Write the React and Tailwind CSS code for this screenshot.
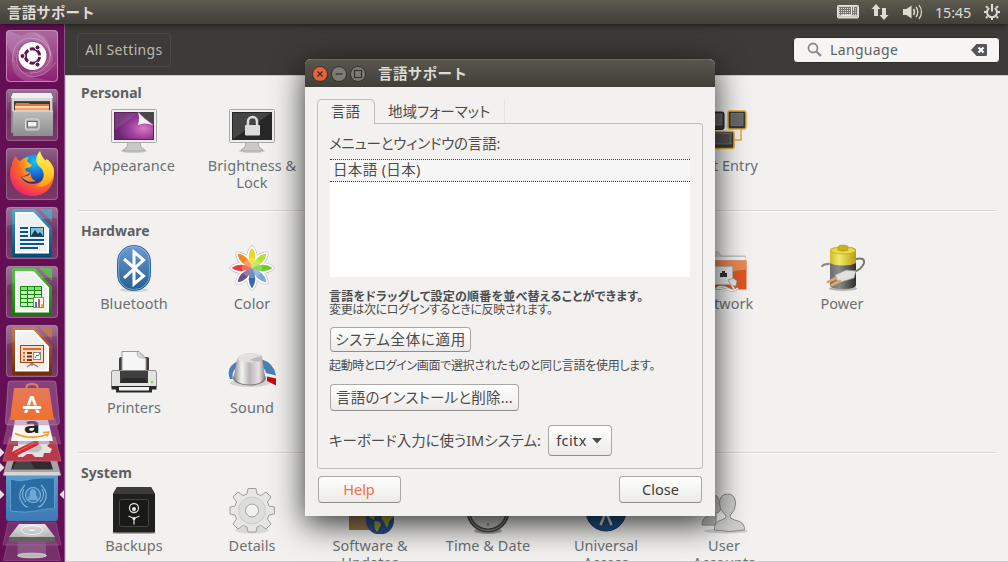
import React from 'react';

const JP = 'font-["Noto_Sans","Noto_Sans_CJK_JP",sans-serif]';

/* ---------- top panel ---------- */

const TopPanel = () => (
  <header className="relative z-10 h-6 shrink-0 flex items-center justify-between pl-[7px] pr-2 bg-linear-to-b from-[#5d5a4f] to-[#403f3a] shadow-[0_1px_6px_rgba(0,0,0,0.6)]">
    <span className='-mt-px font-["Noto_Sans_CJK_JP",sans-serif] font-bold text-[14.5px] tracking-[0.15px] leading-6 text-[#dfdbd2]'>言語サポート</span>
    <div className="flex items-center text-[#dfdbd2]">
      <svg width="22" height="14" viewBox="0 0 22 14" className="mr-3">
        <rect x="0.5" y="0.5" width="21" height="12.5" rx="1" fill="#cfccc6" stroke="#e8e5df" />
        <rect x="2" y="2" width="18" height="8" fill="#77756f" />
        <path d="M2 3.5h18M2 5.5h18M2 7.5h18M2 9.5h18" stroke="#d9d6d0" strokeWidth="1" strokeDasharray="1 1" />
        <path d="M14.5 2v8M16.5 2v3" stroke="#efece6" strokeWidth="1" />
        <path d="M5 10h9" stroke="#fff" strokeWidth="1" />
      </svg>
      <svg width="18" height="18" viewBox="0 0 18 18" className="mr-3.5" fill="currentColor">
        <path d="M5 1L9.5 6H7v7H3V6H.5z" />
        <path d="M13 17l4.5-5H15V5h-4v7H8.5z" />
      </svg>
      <svg width="21" height="18" viewBox="0 0 21 18" className="mr-[11px]" fill="none" stroke="currentColor">
        <path d="M0 6h3.5L8.500 2.500v13L3.500 12H0z" fill="currentColor" stroke="none" />
        <path d="M10.500 6q2 3 0 6" strokeWidth="1.5" />
        <path d="M13 4q3.600 5 0 10" strokeWidth="1.300" />
        <path d="M16 2q5 7 0 14" strokeWidth="1.200" />
      </svg>
      <span className='font-["Noto_Sans",sans-serif] text-[14.5px] leading-6 w-[37px] mr-3 tracking-[-0.2px]'>15:45</span>
      <svg width="16" height="18" viewBox="0 0 16 18" fill="none" stroke="currentColor">
        <path d="M5.300 5A5 5 0 1 0 10.700 5" strokeWidth="2" />
        <path d="M8 1v7.500" strokeWidth="2" />
        <path d="M3.500 13.500l-1.500 1.500M12.500 13.500l1.500 1.500M2.600 9H0M13.400 9H16M8 14.500V17M3.700 4.800L2 3.200M12.300 4.800L14 3.200" strokeWidth="2" />
      </svg>
    </div>
  </header>
);

/* ---------- launcher ---------- */

const Tile = ({ children, className = 'bg-linear-to-b from-[#8f6189] via-[#70305f] to-[#7a3a6c]' }) => (
  <div className={`h-[52px] w-[52px] shrink-0 rounded-[4px] overflow-hidden shadow-[inset_0_0_0_1px_rgba(255,255,255,0.22)] ${className}`}>
    <svg width="52" height="52" viewBox="0 0 52 52">{children}</svg>
  </div>
);

const DashIcon = () => (
  <Tile className="bg-linear-to-b from-[#aa6ba0] to-[#8f1a74]">
    <g fill="#fff" opacity="0.14">
      <path d="M0 0Q14 4 25 11Q10 12 10 28Q-2 18 0 0z" />
      <path d="M26 2Q46 4 44 26Q40 12 26 10Q10 8 8 24Q8 4 26 2z" />
      <path d="M44 18Q52 34 38 44Q24 50 14 42Q34 42 40 32Q44 26 44 18z" />
      <path d="M8 20Q6 40 30 48L52 52H20Q0 42 8 20z" />
    </g>
    <g fill="none" stroke="#fff" strokeOpacity=".35" strokeWidth=".8">
      <path d="M7 32Q5 10 24 8Q42 8 45 26" />
      <path d="M28 3Q47 12 44 30Q38 44 24 43" />
      <path d="M12 20Q6 38 22 46Q38 50 50 32" />
    </g>
    <rect x="0.5" y="0.5" width="51" height="51" rx="4" fill="none" stroke="#cf8fc3" strokeOpacity="0.7" />
    <circle cx="26.500" cy="26" r="14" fill="#fff" />
    <circle cx="26.500" cy="26" r="7.200" fill="none" stroke="#5c174c" strokeWidth="3" strokeDasharray="13.100 2" strokeDashoffset="-1" />
    <g fill="#5c174c" stroke="#fff" strokeWidth="1">
      <circle cx="16.500" cy="26" r="2.500" />
      <circle cx="31.500" cy="17.400" r="2.500" />
      <circle cx="31.500" cy="34.600" r="2.500" />
    </g>
  </Tile>
);

const FilesIcon = () => (
  <Tile>
    <defs>
      <linearGradient id="cab" x1="0" y1="0" x2="0" y2="1">
        <stop offset="0" stopColor="#bdbdbd" />
        <stop offset="1" stopColor="#8e8e8e" />
      </linearGradient>
    </defs>
    <path d="M7 4h38l2 5v35H5V9z" fill="#d9d9d9" />
    <path d="M5 9h42v35H5z" fill="#8b8b8b" />
    <path d="M7 4h38l2 5H5z" fill="#ececec" />
    <path d="M6 9h40v13H6z" fill="#d3d3d3" />
    <rect x="8" y="12" width="36" height="10" fill="#3e3632" />
    <path d="M9 16l1-2h13l1 1h19v7H9z" fill="#e0763a" />
    <rect x="9" y="17" width="34" height="2" fill="#f7d9bd" />
    <rect x="9" y="19" width="34" height="3" fill="#f0a35c" />
    <rect x="7" y="21.500" width="40" height="25.500" rx="1" fill="url(#cab)" />
    <path d="M7 22h40" stroke="#e6e6e6" />
    <rect x="19.500" y="30" width="13.500" height="11" rx="2" fill="#adadad" stroke="#dedede" />
    <rect x="21.500" y="32.500" width="9.500" height="5.500" fill="#f1f1f1" stroke="#666" />
    <path d="M2 1h48v12H2z" fill="#fff" opacity=".1" />
  </Tile>
);

const FirefoxIcon = () => (
  <Tile>
    <defs>
      <radialGradient id="ffx" cx=".75" cy=".15" r=".95">
        <stop offset="0" stopColor="#fff14a" />
        <stop offset=".35" stopColor="#ffb51e" />
        <stop offset=".6" stopColor="#ff6a24" />
        <stop offset="1" stopColor="#ee1e6e" />
      </radialGradient>
      <radialGradient id="globe" cx=".6" cy=".25" r=".8">
        <stop offset="0" stopColor="#18c3f7" />
        <stop offset=".5" stopColor="#1576d8" />
        <stop offset="1" stopColor="#25237e" />
      </radialGradient>
      <linearGradient id="flame" x1="0" y1="0" x2="0" y2="1">
        <stop offset="0" stopColor="#fff45a" />
        <stop offset=".6" stopColor="#ffd02c" />
        <stop offset="1" stopColor="#ff9a1c" />
      </linearGradient>
    </defs>
    <circle cx="26" cy="21" r="14.500" fill="url(#globe)" />
    <path d="M10 8Q6 12 6 17Q4 20 4 26C4 39 14 48 27 48C40 48 48 38 48 26C48 20 45 14 42 12C43 24 39 36 27 36C20 36 16 32 15 28C18 29 21 27 24 24C20 24 18 22 20 20Q25 20 26 17Q22 15 21 13Q22 10 23 9Q18 9 14 13Q11 12 10 8z" fill="url(#ffx)" />
    <path d="M34 3C28 10 30 16 35 20C40 25 38 34 30 38C39 41 48 34 48 23C48 17 44 15 42 12C40 10 40 13 39 12C36 9 35 6 34 3z" fill="url(#flame)" />
    <path d="M15 28q6 2 10-3q-1 6 5 8q-9 3-15-5z" fill="#ff8a20" />
  </Tile>
);

const OfficeIcon = ({ id, light, dark, children }) => (
  <Tile>
    <defs>
      <linearGradient id={id} x1="0" y1="0" x2="0" y2="1">
        <stop offset="0" stopColor={light} />
        <stop offset="1" stopColor={dark} />
      </linearGradient>
    </defs>
    <path d="M8 2H29L46 21V48q0 2-2 2H8q-2 0-2-2V4q0-2 2-2z" fill={`url(#${id})`} />
    <path d="M33.500 2H46v13z" fill={light} opacity=".85" />
    <path d="M9 5H27.500L43 21.500V46.500H9z" fill="#fff" />
    <path d="M11 7H26.500L41 22.500V44.500H11z" fill="#f0f0f0" />
    {children}
    <path d="M1 1h50v10Q24 12 1 19z" fill="#fff" opacity=".12" />
  </Tile>
);

const WriterIcon = () => (
  <OfficeIcon id="wr" light="#3a9ac9" dark="#064a75">
    <path d="M14 21h8M14 25h8M14 29h8M14 33h24M14 37h24M14 41h18" stroke="#0a5787" strokeWidth="2" />
    <rect x="24.500" y="20.500" width="13" height="9" fill="#6fc4ec" stroke="#0a5787" />
    <path d="M25 29l4-6 3 4 2-2 3 4z" fill="#333" />
    <path d="M35 21h2v2z" fill="#f6c52c" />
  </OfficeIcon>
);

const CalcIcon = () => (
  <OfficeIcon id="ca" light="#4cb83a" dark="#127a06">
    <rect x="14" y="20" width="22" height="21" fill="#c8efc0" />
    <path d="M14 22h22" stroke="#8edb80" strokeWidth="4" />
    <path d="M14.500 20.500h21v20h-21zM14 24.500h22M14 28.500h22M14 32.500h22M14 36.500h22M21.500 20v21M28.500 20v21" stroke="#168a0a" fill="none" />
    <rect x="27.500" y="31.500" width="10" height="10" fill="#fff" stroke="#8a8a8a" />
    <path d="M29 36h2v5h-2z" fill="#1e88d8" />
    <path d="M32 33h2v8h-2z" fill="#e2561c" />
    <path d="M35 38h2v3h-2z" fill="#f4b41c" />
  </OfficeIcon>
);

const ImpressIcon = () => (
  <OfficeIcon id="im" light="#c0673a" dark="#702b06">
    <path d="M26 38v3M26 38l-5 4M26 38l6 4" stroke="#888" strokeWidth="1.500" />
    <rect x="14.500" y="20.500" width="23" height="17" fill="#f8dccb" stroke="#a8410c" />
    <path d="M17 24h18" stroke="#e0662a" strokeWidth="2" />
    <path d="M17 28h2M17 31.500h2M17 35h2" stroke="#e0662a" strokeWidth="2" />
    <path d="M21 28h5M21 31.500h5M21 35h5" stroke="#8a3206" strokeWidth="2" />
    <rect x="27.500" y="27.500" width="7" height="7" fill="#fff" stroke="#888" />
    <path d="M29 33l2-3 1 1 2-3" stroke="#1f9a1f" fill="none" />
  </OfficeIcon>
);

// tiles folded together at the bottom of the launcher
const FoldedStack = () => (
  <svg width="64" height="182" viewBox="0 380 64 182" className="shrink-0">
    <defs>
      <linearGradient id="bag" x1="0" y1="0" x2="0" y2="1">
        <stop offset="0" stopColor="#e5795a" />
        <stop offset="1" stopColor="#f2702a" />
      </linearGradient>
      <linearGradient id="blu" x1="0" y1="0" x2="0" y2="1">
        <stop offset="0" stopColor="#5d9fd2" />
        <stop offset="1" stopColor="#3d78b5" />
      </linearGradient>
      <linearGradient id="dsk" x1="0" y1="0" x2="0" y2="1">
        <stop offset="0" stopColor="#e4e4e4" />
        <stop offset="1" stopColor="#b5b5b5" />
      </linearGradient>
    </defs>
    {/* trash */}
    <path d="M8 541h48l4.500 19.500H3.500z" fill="#8a4c80" opacity=".55" stroke="#b98ab2" strokeOpacity=".6" />
    <path d="M17.500 541h28.500v14q-14 6-28.500 0z" fill="#8d5f88" opacity=".8" />
    <ellipse cx="32" cy="555.500" rx="14.500" ry="2.300" fill="#b9b9b4" stroke="#e4e4e0" strokeWidth=".7" />
    {/* disk */}
    <path d="M8 522h48l5 23H3z" fill="#8a4c80" opacity=".55" stroke="#b98ab2" strokeOpacity=".6" />
    <path d="M19 524h26l10 13H9z" fill="url(#dsk)" />
    <path d="M9 537h46v3.500q-1 1-2 1H11q-2 0-2-1z" fill="#62625f" />
    <ellipse cx="32" cy="530" rx="11" ry="4.500" fill="none" stroke="#f2f2f2" strokeWidth="1" />
    <ellipse cx="32" cy="530" rx="3.500" ry="1.500" fill="#f4f4f4" stroke="#b0b0b0" strokeWidth=".5" />
    <path d="M20 535q12 2 24 0" stroke="#cfcfcf" fill="none" />
    {/* language support */}
    <rect x="6" y="470" width="52" height="51" rx="3" fill="url(#blu)" />
    <path d="M10.500 479q8 3 16 1t16-2t12 0v31q-6-1-14 1t-15 2t-15-1z" fill="#296ba2" stroke="#6ba5d3" strokeWidth=".8" />
    <g fill="none" stroke="#7fb2d8" strokeWidth="1.200">
      <circle cx="33" cy="495" r="7.500" fill="#3a7cb2" />
      <path d="M25 485q-10 10-1 20q2 2 4 2M41 485q10 10 1 20q-2 2-4 2M24 489q-4 7 2 13M42 489q4 7-2 13" />
    </g>
    <path d="M33 489q4 1 3 6l3 5H27l3-5q-1-5 3-6z" fill="#6ea8d2" />
    {/* screen */}
    <path d="M8 457h48l5 18H3z" fill="#a7a3a7" />
    <path d="M15 457h34l4 12.500H11z" fill="#2d2b2d" />
    <path d="M17 460h12l6 9H13z" fill="#555" opacity=".6" />
    <path d="M5 472h54l2 3.500H3z" fill="#d8d5d6" />
    {/* settings */}
    <path d="M10 437h45l6 24H3z" fill="#b63a4a" stroke="#cc6b7a" strokeWidth=".7" />
    <path d="M18 441h6l3-3h6l3 3h6l5-2 3 4-3 3 5 3-2 4h-6l-1 4h-8l-3-3h-5l-4 3h-5l-1-5h-5l2-6h4z" fill="#e5e1e0" />
    <ellipse cx="34" cy="448" rx="8" ry="4.500" fill="#c6bfc0" />
    <path d="M14 454L36 443" stroke="#d02c31" strokeWidth="5.500" strokeLinecap="round" />
    <path d="M15 453L34 443" stroke="#ee6a66" strokeWidth="1" strokeLinecap="round" />
    {/* amazon */}
    <path d="M9 418h46l6 26H3z" fill="#a46f9d" opacity=".45" stroke="#c79cc2" strokeOpacity=".6" strokeWidth=".7" />
    <path d="M15 420h33l5 21H11z" fill="#f6f6f6" />
    <text x="0" y="0" textAnchor="middle" fontSize="21" fontWeight="700" fill="#242424" fontFamily="Open Sans, sans-serif" transform="translate(32 433) scale(1.300 1)">a</text>
    <path d="M15 433.500q17 7 32 1" stroke="#f79a1c" strokeWidth="1.800" fill="none" />
    <path d="M43 432.500l6-.5-2 4.500" stroke="#f79a1c" strokeWidth="1.300" fill="none" />
    {/* software */}
    <path d="M10 381h44q2 0 2 3l3.500 38q0 3-3 3H8q-3 0-2.500-3L8 384q0-3 2-3z" fill="#a9749f" fillOpacity=".5" stroke="#c79cc2" strokeOpacity=".6" strokeWidth=".7" />
    <path d="M14 388h35l5 32H10z" fill="url(#bag)" />
    <path d="M26.500 392v-5q0-3 5.500-3t5.500 3v5" fill="none" stroke="#dd8168" strokeWidth="2" />
    <text x="32" y="412.500" textAnchor="middle" fontSize="22" fontWeight="700" fill="#fff" fontFamily="Lato, sans-serif">A</text>
    <path d="M23.500 407.500H40" stroke="#f27840" strokeWidth="4.500" />
    <path d="M24 407.500H40" stroke="#fff" strokeWidth="2.800" strokeLinecap="round" />
    {/* running and focus marks */}
    <path d="M0 448l4.500 4.500L0 457zM0 463l4.500 4.500L0 472zM0 490l4.500 4.500L0 499zM64 490l-4.500 4.500L64 499z" fill="#e6dfe4" />
  </svg>
);

const Launcher = () => (
  <nav className="w-[65px] shrink-0 overflow-hidden flex flex-col items-center bg-[#640f54] border-r border-[#8c5682] pt-1.5">
    <div className="flex flex-col gap-[7px] mb-[3px]">
      <DashIcon />
      <FilesIcon />
      <FirefoxIcon />
      <WriterIcon />
      <CalcIcon />
      <ImpressIcon />
    </div>
    <FoldedStack />
  </nav>
);

/* ---------- settings icons, 48x48 ---------- */

const Monitor = ({ children }) => (
  <>
    <ellipse cx="24" cy="45" rx="13" ry="2" fill="#000" opacity=".15" />
    <path d="M18 36h12l1 5 4 3q0 1-2 1H15q-2 0-2-1l4-3z" fill="#c9c9c7" stroke="#8f8f8d" strokeWidth=".6" />
    <rect x="1.500" y="3.500" width="45" height="33" rx="1" fill="#ededeb" stroke="#a9a9a7" />
    <rect x="4" y="6" width="40" height="28" fill="#272727" />
    {children}
  </>
);

const AppearanceIcon = () => (
  <Monitor>
    <defs>
      <radialGradient id="wall" cx=".75" cy=".6" r=".7">
        <stop offset="0" stopColor="#d77ac4" />
        <stop offset=".5" stopColor="#a23fa0" />
        <stop offset="1" stopColor="#67276b" />
      </radialGradient>
    </defs>
    <rect x="4" y="6" width="40" height="28" fill="#5c1f5c" />
    <rect x="5" y="7" width="38" height="26" fill="url(#wall)" />
    <path d="M5 7h23L5 24z" fill="#fff" opacity=".1" />
    <path d="M28 6h16v13z" fill="#484848" />
    <path d="M28 6q2 6 0 13q6-3 15 0q-8-5-15-13z" fill="#f2f2f2" />
  </Monitor>
);

const LockIcon = () => (
  <Monitor>
    <path d="M5 7h38L5 33z" fill="#fff" opacity=".14" />
    <rect x="17" y="19" width="15" height="10.500" rx="1" fill="#dcdcdc" />
    <path d="M20 19v-3.500a4.500 4.500 0 0 1 9 0V19" fill="none" stroke="#dcdcdc" strokeWidth="2.500" />
  </Monitor>
);

const TextEntryIcon = () => (
  <>
    <path d="M41 22v12h-8" fill="none" stroke="#e0a92e" strokeWidth="1.500" />
    <rect x="8" y="6" width="16" height="17.500" rx="2" fill="#383838" stroke="#222" />
    <rect x="12" y="8" width="10" height="11" fill="#626262" stroke="#8a8a8a" strokeWidth=".6" />
    <rect x="28" y="5" width="18" height="18" rx="2" fill="#383838" stroke="#e3a92c" strokeWidth="1.500" />
    <rect x="31" y="7.500" width="12" height="12" fill="#686868" stroke="#8a8a8a" strokeWidth=".6" />
    <rect x="4" y="25.500" width="30" height="17" rx="2" fill="#383838" stroke="#e3a92c" strokeWidth="1.500" />
    <rect x="7" y="27.500" width="24" height="10.500" fill="#525252" stroke="#8a8a8a" strokeWidth=".6" />
  </>
);

const BluetoothIcon = () => (
  <>
    <defs>
      <linearGradient id="bt" x1="0" y1="0" x2="0" y2="1">
        <stop offset="0" stopColor="#6c9bd1" />
        <stop offset="1" stopColor="#235f93" />
      </linearGradient>
    </defs>
    <ellipse cx="24" cy="46" rx="14" ry="2" fill="#000" opacity=".12" />
    <rect x="7.500" y="1.500" width="33" height="45" rx="16" fill="url(#bt)" stroke="#2a659a" />
    <rect x="8.500" y="2.500" width="31" height="43" rx="15" fill="none" stroke="#a7c6e6" strokeOpacity=".6" />
    <path d="M14 15l19.500 17L24 40V8l9.500 8L14 34" fill="none" stroke="#fff" strokeWidth="3" />
  </>
);

const PETALS = ['#efd51c', '#b2e032', '#70c92a', '#7aa5d8', '#3969ab', '#74508b', '#e83d3d', '#f4861e'];

const ColorIcon = () => (
  <>
    <g fill="#fff" stroke="#b9b9b9" strokeWidth="5">
      {PETALS.map((c, i) => (
        <path key={c} d="M24 24Q18 12 24 4Q30 12 24 24z" transform={`rotate(${i * 45} 24 24)`} strokeLinejoin="round" />
      ))}
    </g>
    <g fill="#fff" stroke="#fff" strokeWidth="4">
      {PETALS.map((c, i) => (
        <path key={c} d="M24 24Q18 12 24 4Q30 12 24 24z" transform={`rotate(${i * 45} 24 24)`} strokeLinejoin="round" />
      ))}
    </g>
    {PETALS.map((c, i) => (
      <g key={c} transform={`rotate(${i * 45} 24 24)`}>
        <path d="M24 24Q17.500 12 24 3.500Q30.500 12 24 24z" fill={c} />
        <path d="M24 24Q21 18 21.500 14h5Q27 18 24 24z" fill="#fff" opacity=".25" />
      </g>
    ))}
  </>
);

const NetworkIcon = () => (
  <>
    <path d="M4 12l2-4h12l3 4h24v10H4z" fill="#d8d8d6" stroke="#a0a0a0" strokeWidth=".7" />
    <rect x="2" y="13" width="43" height="3" fill="#f3f3f3" />
    <path d="M3 16.500h43.500v28q0 1-1 1H3z" fill="#df5421" />
    <path d="M3 16.500h43.500v9Q30 27 3 34z" fill="#ec9263" opacity=".8" />
    <rect x="13.500" y="22.500" width="19" height="18" rx="1" fill="#ecebe9" stroke="#b5b5b3" />
    <path d="M20 29h2v-2h3v2h2v4h-7z" fill="#333" />
    <path d="M28 36l5-2 4 3-1 5-5 0z" fill="#e4e4e2" stroke="#8b8b89" strokeWidth=".7" />
    <path d="M32 42q6 6-4 4t-11-2q4-3 12 1q6 3 9-1" fill="none" stroke="#a0a09e" strokeWidth="2.200" />
    <path d="M32 42q6 6-4 4t-11-2q4-3 12 1q6 3 9-1" fill="none" stroke="#f6f6f4" strokeWidth="1.300" />
  </>
);

const PowerIcon = () => (
  <>
    <defs>
      <linearGradient id="bat" x1="0" y1="0" x2="1" y2="0">
        <stop offset="0" stopColor="#6d6d6b" />
        <stop offset=".35" stopColor="#8b8b89" />
        <stop offset="1" stopColor="#2e2e2c" />
      </linearGradient>
      <linearGradient id="bty" x1="0" y1="0" x2="1" y2="0">
        <stop offset="0" stopColor="#cdbb22" />
        <stop offset=".35" stopColor="#f4ea6c" />
        <stop offset="1" stopColor="#b79c12" />
      </linearGradient>
    </defs>
    <ellipse cx="25" cy="44.500" rx="14" ry="2.500" fill="#000" opacity=".25" />
    <path d="M3.500 22.500q3-3 8-2.500" fill="none" stroke="#888" strokeWidth="2.300" />
    <path d="M12 18v23q0 4 13 4t13-4V18z" fill="url(#bat)" />
    <path d="M12 6q0-3.500 13-3.500T38 6v13q-4 2.500-13 2.500T12 19z" fill="url(#bty)" />
    <ellipse cx="25" cy="6.500" rx="12.500" ry="3.500" fill="#e6d84a" stroke="#b59d17" strokeWidth=".6" />
    <path d="M20 3q0-2 5-2t5 2v3q-5 2-10 0z" fill="#cbb21b" stroke="#9c8610" strokeWidth=".5" />
    <path d="M38 15q9-2 8 4q-2 6-10 9" fill="none" stroke="#777775" strokeWidth="2" />
    <path d="M17 31l11-5 10 1-2 7-16 5z" fill="#e0e0de" stroke="#8f8f8d" strokeWidth=".7" />
    <path d="M10 38l8-4M14 41l8-4" stroke="#dba76a" strokeWidth="2.600" strokeLinecap="round" />
  </>
);

const PrinterIcon = () => (
  <>
    <rect x="9" y="9" width="30" height="18" rx="2" fill="#3e3e3e" />
    <path d="M12 3.500h17l7 7V27H12z" fill="#f7f7f7" stroke="#999" />
    <path d="M27 4q-1 7 8 6z" fill="#dadada" stroke="#aaa" strokeWidth=".7" />
    <path d="M3 22.500h42q1.500 0 1.500 2v14h-45v-14q0-2 1.500-2z" fill="#e3e3e1" stroke="#8e8e8c" />
    <rect x="10" y="23" width="28" height="12" fill="#3f3f3f" />
    <path d="M10 35l3-5h22l3 5z" fill="#2b2b2b" />
    <circle cx="42" cy="34" r="1.300" fill="#8ccf6b" />
    <path d="M1.500 38h45v3.500H42v3H6v-3H1.500z" fill="#292929" />
    <rect x="9" y="39" width="30" height="3.500" fill="#f2f2f2" />
  </>
);

const SoundIcon = () => (
  <>
    <defs>
      <linearGradient id="knob" x1="0" y1="0" x2="1" y2="0">
        <stop offset="0" stopColor="#8b8b89" />
        <stop offset=".25" stopColor="#f4f4f4" />
        <stop offset=".5" stopColor="#b9b5b7" />
        <stop offset=".8" stopColor="#eddfe8" />
        <stop offset="1" stopColor="#88888a" />
      </linearGradient>
    </defs>
    <ellipse cx="22" cy="35" rx="20" ry="4" fill="#000" opacity=".12" />
    <path d="M2 31Q-3 19 10 13L9 19Q3 24 5 31z" fill="#4a7fb8" />
    <path d="M33 11Q46 15 48 27.500L38 25Q37 20 31 16z" fill="#4a7fb8" />
    <path d="M39 28.500l9 2v7l-9-4.500z" fill="#c80a10" />
    <ellipse cx="21.500" cy="30" rx="16.500" ry="7.500" fill="#828280" />
    <path d="M9 11Q12 5 21.500 5T34 9L37 28q-2 8.500-15.500 8.500T6 28z" fill="url(#knob)" />
    <path d="M9 11Q12 5 21 5Q28 5 33.500 7.500l.5 3.500Q28 15 21 14.500T9 11z" fill="#e2e1e0" />
    <path d="M21 12L34 7.500V12q-4 3-13 0z" fill="#bdbcbb" />
  </>
);

const BackupsIcon = () => (
  <>
    <ellipse cx="24" cy="47" rx="22" ry="1.500" fill="#000" opacity=".3" />
    <path d="M7 1h34l4 7v38.500H3V8z" fill="#20211f" />
    <path d="M7 1h34l4 7H3z" fill="#3c3d3a" />
    <rect x="9.500" y="13.500" width="29" height="27" rx="2" fill="#191a18" stroke="#454641" />
    <circle cx="24" cy="22" r="4.500" fill="#151515" stroke="#d9d9d9" strokeWidth="1.300" />
    <circle cx="24" cy="23" r="2" fill="#e8e8e8" />
    <path d="M24 32.500l-5.500-2.500M24 32.500l5.500-2.500M24 32.500v6" stroke="#cfcfcf" strokeWidth="1.300" />
    <circle cx="24" cy="32.500" r="1.500" fill="#efefef" />
  </>
);

const DetailsIcon = () => (
  <>
    <ellipse cx="24" cy="44" rx="17" ry="3.500" fill="#000" opacity=".1" />
    <g fill="#e6e6e4" stroke="#a0a09e" strokeWidth="1" strokeLinejoin="round">
      <path d="M20 2.500h8l1 5.500 4 1.500 5-3.500 5 5-3.500 5 1.500 4 5.500 1v7l-5.500 1-1.500 4 3.500 5-5 5-5-3.500-4 1.500-1 5h-8l-1-5-4-1.500-5 3.500-5-5L8.500 33 7 29l-5-1v-7l5-1 1.500-4L5 11l5-5 5 3.500L19 8z" />
      <circle cx="24" cy="24.500" r="13.500" fill="#dededc" stroke="#cacac8" />
      <circle cx="24" cy="24.500" r="6.500" fill="#f2f1f0" />
    </g>
  </>
);

const UpdatesIcon = () => (
  <>
    <path d="M3 6h30v38H3z" fill="#9b7a52" />
    <circle cx="34" cy="34.500" r="14" fill="#2c4f8f" />
    <path d="M24 25q6-5 11-3l-1 5-5 2-1 5-5-3zM29 35q6 0 6 4l-4 7q-4-5-2-11zM37 26q5-4 8 0l2 5-4 5-2 6-3-6-3-4z" fill="#9aa52c" />
  </>
);

const ClockIcon = () => (
  <>
    <ellipse cx="24" cy="45" rx="14" ry="3" fill="#000" opacity=".3" />
    <circle cx="24" cy="25" r="19.500" fill="#c4c4c2" stroke="#4a4a4a" strokeWidth="4" />
    <circle cx="24" cy="25" r="19.500" fill="none" stroke="#999" strokeWidth="1" />
    <path d="M24 37v3" stroke="#555" />
  </>
);

const AccessIcon = () => (
  <>
    <circle cx="24" cy="25" r="20" fill="#1f5280" stroke="#173e63" />
    <path d="M24 13v13l-5.500 13M24 26l5.500 13M14 19h20" fill="none" stroke="#dcdcdc" strokeWidth="2.500" />
  </>
);

const UsersIcon = () => (
  <>
    <ellipse cx="26" cy="45" rx="22" ry="2.500" fill="#000" opacity=".15" />
    <g stroke="#8a8a88" fill="#b9b9b7">
      <path d="M2 39q0-8 8-10v-2q-4-4-4-9t6-8 8 7-4 10v12z" />
      <path d="M14.500 44q-1-8 7-10l4-2q1-1 0-3-6-5-6-11 0-10 8-10t8 10q0 6-5 11-1 2 0 3l4 2q11 2 10 10-15 3-30 0z" fill="#cfcfcd" />
    </g>
  </>
);

/* ---------- settings window ---------- */

const SettingItem = ({ icon, label, className = '' }) => (
  <div className={`flex flex-col items-center ${className}`}>
    <svg width="48" height="48" viewBox="0 0 48 48">{icon}</svg>
    <div className="mt-[3px] text-center whitespace-pre-line text-[14.500px] leading-[17px] tracking-[0.05px] text-[#6c7072]">{label}</div>
  </div>
);

const Section = ({ title, className = '', children }) => (
  <section className={`mx-3 border-t border-[#d9d7d5] shadow-[inset_0_1px_0_#fbfbfa] ${className}`}>
    <h2 className="pl-[3px] h-5 text-[14px] leading-5 font-bold text-[#5f5f5f]">{title}</h2>
    <div className="-ml-[3px] grid grid-cols-[repeat(7,118px)]">{children}</div>
  </section>
);

const SettingsWindow = () => (
  <main className="flex-1 min-w-0 flex flex-col overflow-hidden">
    <div className="h-[51px] shrink-0 flex items-center justify-between pl-3 pr-2 bg-[#3c3b37]">
      <button className="h-[34px] w-[94px] rounded border border-[#4a4944] text-[14px] tracking-[0.35px] text-[#bcb8ae]">All Settings</button>
      <div className="h-[26px] w-[207px] flex items-center rounded bg-[#f6f5f4] border border-[#2d2c29] pl-[13px] pr-3 text-[#5e6264]">
        <svg width="16" height="16" viewBox="0 0 16 16" className="mr-[7px]" fill="none" stroke="#8b8b89">
          <circle cx="6" cy="6" r="4.500" strokeWidth="1.800" />
          <path d="M9.500 9.500l4.500 4.500" strokeWidth="2.200" />
        </svg>
        <span className="text-[14px] leading-5 tracking-[0.35px] flex-1">Language</span>
        <svg width="16" height="12" viewBox="0 0 16 12">
          <path d="M0 6L5.500 0H15q1 0 1 1v10q0 1-1 1H5.500z" fill="#555759" />
          <path d="M7.500 3.500l5 5M12.500 3.500l-5 5" stroke="#fff" strokeWidth="2" />
        </svg>
      </div>
    </div>
    <div className="flex-1 min-h-0 overflow-hidden bg-[#f2f1f0] border-t border-l border-b border-[#cfcdca]">
      <Section title="Personal" className="h-[134px] border-t-0 pt-[7px] shadow-none [&>div]:mt-[3px]">
        <SettingItem icon={<AppearanceIcon />} label="Appearance" />
        <SettingItem icon={<LockIcon />} label={'Brightness &\nLock'} />
        <SettingItem icon={<TextEntryIcon />} label="Text Entry" className="col-start-6" />
      </Section>
      <Section title="Hardware" className="h-[242px] pt-[10px] [&>div]:gap-y-[36px] [&>div]:mt-[3px]">
        <SettingItem icon={<BluetoothIcon />} label="Bluetooth" />
        <SettingItem icon={<ColorIcon />} label="Color" />
        <SettingItem icon={<NetworkIcon />} label="Network" className="col-start-6" />
        <SettingItem icon={<PowerIcon />} label="Power" />
        <SettingItem icon={<PrinterIcon />} label="Printers" />
        <SettingItem icon={<SoundIcon />} label="Sound" />
      </Section>
      <Section title="System" className="pt-[10px] [&>div]:mt-[3px]">
        <SettingItem icon={<BackupsIcon />} label="Backups" />
        <SettingItem icon={<DetailsIcon />} label="Details" />
        <SettingItem icon={<UpdatesIcon />} label={'Software &\nUpdates'} />
        <SettingItem icon={<ClockIcon />} label="Time & Date" />
        <SettingItem icon={<AccessIcon />} label={'Universal\nAccess'} />
        <SettingItem icon={<UsersIcon />} label={'User\nAccounts'} />
      </Section>
    </div>
  </main>
);

/* ---------- language support dialog ---------- */

const Button = ({ className = '', children }) => (
  <button className={`flex items-center justify-center whitespace-nowrap rounded-[4px] border border-[#aaa8a5] border-b-[#8f8d8a] bg-linear-to-b from-white to-[#ecebe9] ${className}`}>
    {children}
  </button>
);

const WindowButton = ({ className, children }) => (
  <svg width="16" height="16" viewBox="0 0 16 16" className={className} fill="none" stroke="#34332f">
    <circle cx="8" cy="8" r="7.500" fill="currentColor" />
    {children}
  </svg>
);

const LanguageDialog = () => (
  <div className={`absolute left-[305px] top-[59px] w-[410px] h-[457px] flex flex-col rounded-t-[6px] bg-[#f2f1f0] text-[#4c4c4c] shadow-[0_8px_32px_rgba(0,0,0,0.8)] ${JP} [font-feature-settings:"palt"]`}>
    <div className="h-7 shrink-0 flex items-center gap-[3px] pl-[7px] rounded-t-[6px] border-t border-[#6b6960] bg-linear-to-b from-[#58564d] to-[#403f3a]">
      <WindowButton className="text-[#ea6236]"><path d="M5.500 5.500l5 5M10.500 5.500l-5 5" strokeWidth="1.300" /></WindowButton>
      <WindowButton className="text-[#7d7b73]"><path d="M4.500 8h7" strokeWidth="1.300" /></WindowButton>
      <WindowButton className="text-[#7d7b73]"><rect x="4.500" y="4.500" width="7" height="7" strokeWidth="1.200" /></WindowButton>
      <span className='-mt-0.5 ml-[9px] font-["Noto_Sans_CJK_JP",sans-serif] [font-feature-settings:normal] font-bold text-[14.500px] tracking-[0.4px] leading-6 text-[#dfdbd2]'>言語サポート</span>
    </div>

    <div className="px-3 pt-3 flex flex-col">
      <div className="flex h-6 text-[14.500px] leading-[23px]">
        <div className="relative z-10 w-[58px] h-[25px] pr-px text-center rounded-t-[5px] border border-b-0 border-[#c0bebb] bg-[#f2f1f0]">言語</div>
        <div className="w-[130px] pl-[13px] pt-px border-r border-[#e3e2e0]">地域フォーマット</div>
      </div>
      <div className="h-[346px] rounded-b-[3px] rounded-tr-[3px] border border-[#c0bebb] px-3 pt-[9px]">
        <div className="-ml-px h-5 text-[14.500px] leading-5 tracking-[-0.2px]">メニューとウィンドウの言語:</div>
        <div className="mt-[6px] h-[118px] w-[360px] bg-white">
          <div className="h-[23px] border-y border-dotted border-[#3c3c3c] bg-[#f7f7f7] pl-[3px] text-[14.500px] leading-[19px] tracking-[0.35px]">日本語 (日本)</div>
        </div>
        <p className="-ml-px mt-[13px] h-[13px] text-[12px] leading-[13px] tracking-[0.25px] font-bold whitespace-nowrap">言語をドラッグして設定の順番を並べ替えることができます。</p>
        <p className="-ml-px h-[24px] text-[12px] leading-[13px] tracking-[-0.36px] whitespace-nowrap">変更は次にログインするときに反映されます。</p>
        <Button className="h-[25px] w-[141px] text-[14.500px] tracking-[0.65px]">システム全体に適用</Button>
        <p className="-ml-px mt-[6px] h-[26px] text-[12px] leading-[16px] tracking-[-0.32px] whitespace-nowrap">起動時とログイン画面で選択されたものと同じ言語を使用します。</p>
        <Button className="h-[27px] w-[189px] text-[14.500px] tracking-[0.2px]">言語のインストールと削除...</Button>
        <div className="mt-[14px] flex items-center justify-between pr-[78px] text-[14.500px]">
          <span className="-ml-px">キーボード入力に使うIMシステム:</span>
          <Button className="h-[31px] w-16 gap-[5px] pr-0.5 text-[#3c3c3c] tracking-[0.4px]">
            fcitx
            <svg width="10" height="6" viewBox="0 0 10 6"><path d="M0 0h10L5 5.500z" fill="#4c4c4c" /></svg>
          </Button>
        </div>
      </div>
      <div className="mt-[7px] flex justify-between px-px text-[14.500px]">
        <Button className="h-[27px] w-[83px] pr-px text-[#f0703e]">Help</Button>
        <Button className="h-[27px] w-[83px] text-[#3c3c3c]">Close</Button>
      </div>
    </div>
  </div>
);

const App = () => (
  <div className='relative w-[1008px] h-[562px] overflow-hidden flex flex-col font-["Noto_Sans",sans-serif]'>
    <TopPanel />
    <div className="flex-1 min-h-0 flex">
      <Launcher />
      <SettingsWindow />
    </div>
    <LanguageDialog />
  </div>
);

export default App;
